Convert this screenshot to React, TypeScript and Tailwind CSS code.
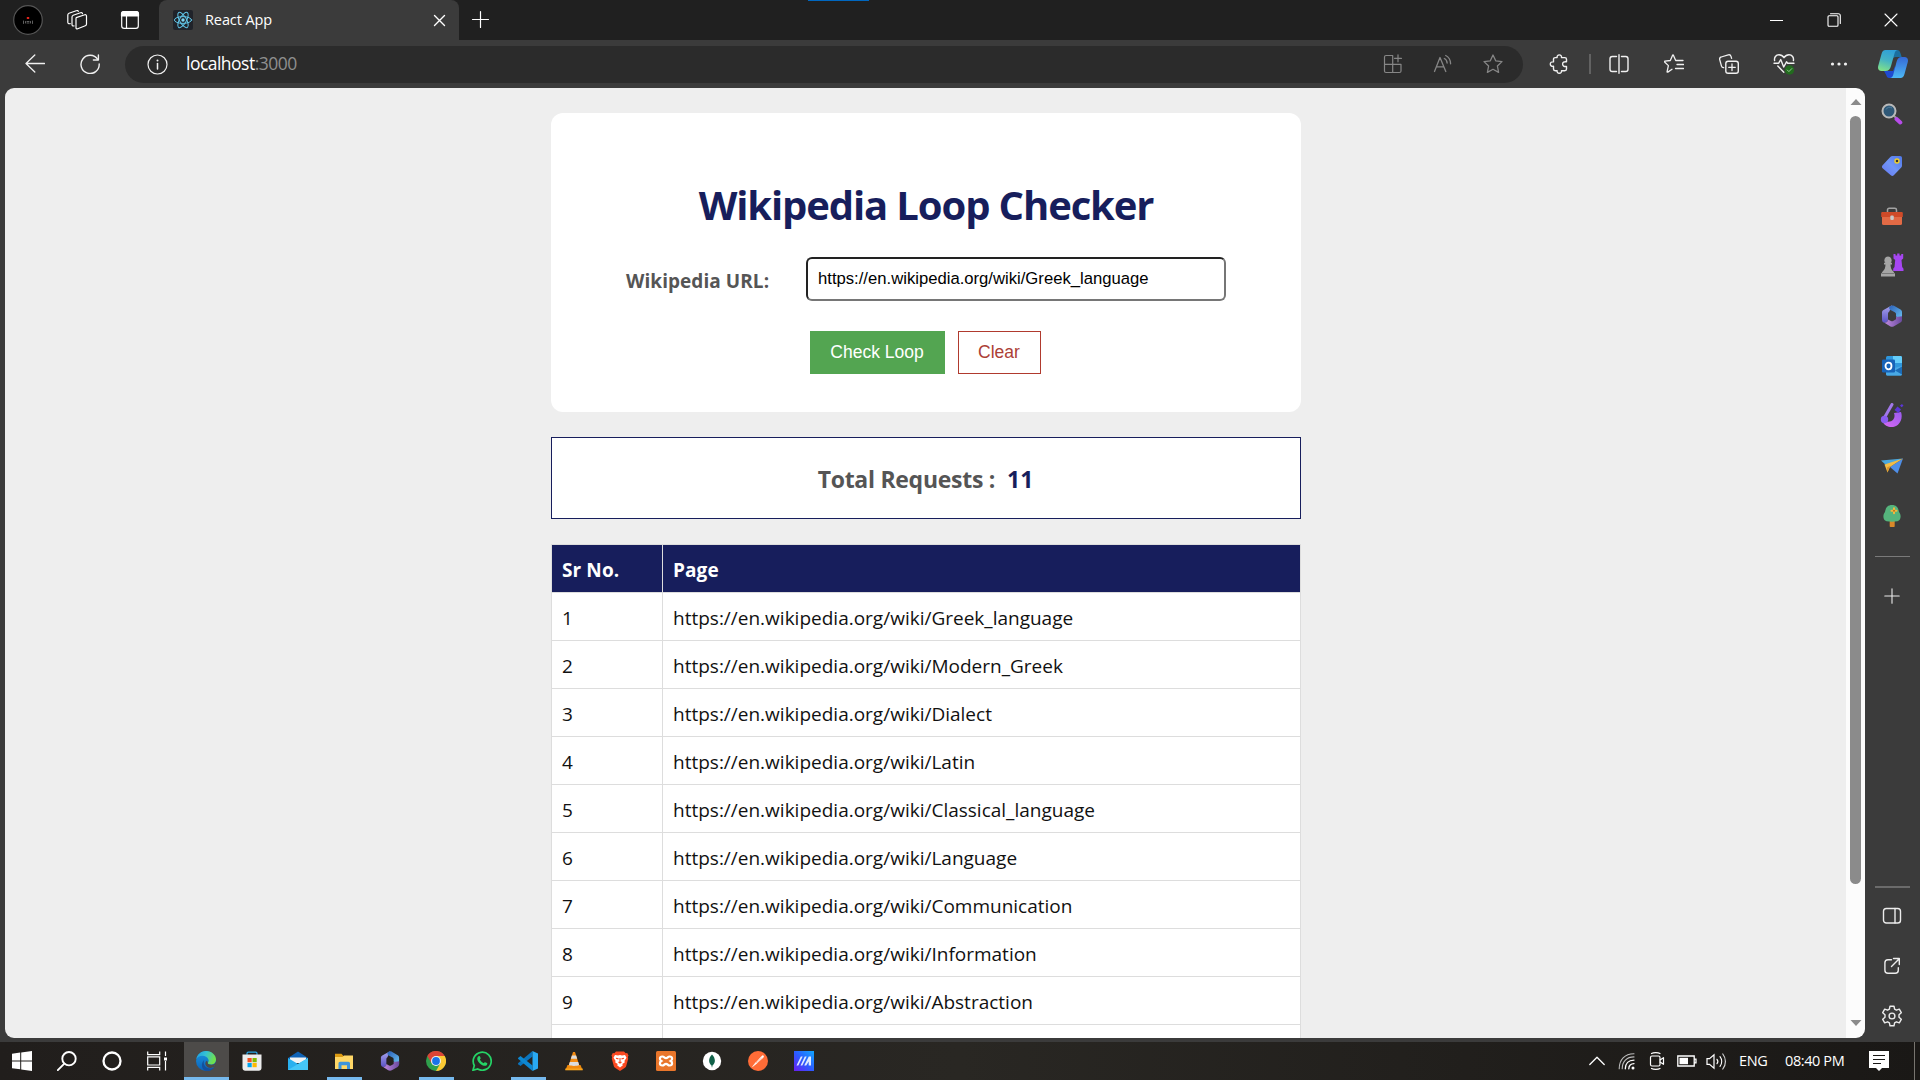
import React from "react";

type IconProps = { children: React.ReactNode; size?: number; className?: string; view?: string };

function Icon({ children, size = 20, className = "", view = "0 0 20 20" }: IconProps) {
  return (
    <svg
      width={size}
      height={size}
      viewBox={view}
      fill="none"
      stroke="currentColor"
      strokeWidth={1.2}
      strokeLinecap="round"
      strokeLinejoin="round"
      className={"block shrink-0 " + className}
    >
      {children}
    </svg>
  );
}

const pages = [
  "https://en.wikipedia.org/wiki/Greek_language",
  "https://en.wikipedia.org/wiki/Modern_Greek",
  "https://en.wikipedia.org/wiki/Dialect",
  "https://en.wikipedia.org/wiki/Latin",
  "https://en.wikipedia.org/wiki/Classical_language",
  "https://en.wikipedia.org/wiki/Language",
  "https://en.wikipedia.org/wiki/Communication",
  "https://en.wikipedia.org/wiki/Information",
  "https://en.wikipedia.org/wiki/Abstraction",
];

function ReactLogo() {
  return (
    <Icon>
      <rect width="20" height="20" rx="2" fill="#20232a" stroke="none" />
      <g stroke="#61c5e8" strokeWidth="1">
        <ellipse cx="10" cy="10" rx="8.6" ry="3.4" />
        <ellipse cx="10" cy="10" rx="8.6" ry="3.4" transform="rotate(60 10 10)" />
        <ellipse cx="10" cy="10" rx="8.6" ry="3.4" transform="rotate(120 10 10)" />
      </g>
      <circle cx="10" cy="10" r="1.7" fill="#7fd6f2" stroke="none" />
    </Icon>
  );
}

function TitleBar() {
  return (
    <header className="relative flex h-[40px] shrink-0 items-center bg-[#202020] text-[#f2f2f2]">
      <div className="flex w-[56px] justify-center">
        <Icon size={30} view="0 0 30 30">
          <circle cx="15" cy="15" r="14.3" fill="#000" stroke="#555" />
          <rect x="13.8" y="12" width="2.4" height="2" fill="#e0241c" stroke="none" />
          <path d="M10.500 16v2.500M12.500 16.500v1.500M19.500 16v2.500M17.500 16.500v1.500M14 16.500h2M14 18h2" stroke="#777" strokeWidth="0.8" />
        </Icon>
      </div>
      <div className="flex w-[42px] justify-center">
        <Icon size={22} view="0 0 22 22" className="text-white">
          <path d="M10.2 8.6l8.6-2.8c1-.3 1.7.2 1.7 1.2v8c0 .9-.4 1.5-1.2 1.8l-7.600 3c-1 .4-1.700-.1-1.700-1.100v-8.300c0-.9-.1-1.500.2-1.800z" />
          <path d="M8 16.900c-1.400.3-2-.2-2-1.300V8c0-.9.4-1.500 1.200-1.800l7.300-2.500c1-.3 1.900 0 2 .9" />
          <path d="M4.200 14.600c-1.600.4-2.400 0-2.400-1.300V6.100c0-.9.400-1.500 1.200-1.800l7.200-2.600c1.200-.4 2-.1 2.100.7" />
        </Icon>
      </div>
      <div className="flex w-[61px] justify-center pl-[2px]">
        <Icon className="text-white">
          <rect x="1.700" y="1.700" width="16.600" height="16.600" rx="2.400" />
          <path d="M1.500 6V3.800c0-1.400.9-2.300 2.300-2.300h12.400c1.400 0 2.300.9 2.300 2.300V6z" fill="currentColor" />
          <path d="M6.500 6v12" />
        </Icon>
      </div>
      <div className="flex h-[40px] w-[300px] items-center rounded-t-[8px] bg-[#3b3b3b] pl-[14px] pr-[13px]">
        <ReactLogo />
        <span className="ml-[12px] flex-1 whitespace-nowrap text-[14.500px] tracking-[-0.100px] text-white">React App</span>
        <Icon size={13} view="0 0 13 13" className="text-white">
          <path d="M1.500 1.500l10 10M11.500 1.500l-10 10" strokeWidth="1.400" />
        </Icon>
      </div>
      <Icon className="ml-[12px] text-white" size={20}>
        <path d="M9.500 1.500v16M1.500 9.500h16" strokeWidth="1.200" />
      </Icon>
      <div className="absolute left-[808px] top-0 h-[1px] w-[61px] bg-[#0067c0]" />
      <div className="ml-auto flex items-center pr-[1px] text-white">
        <div className="flex w-[57px] justify-center">
          <div className="h-[1px] w-[13px] bg-white" />
        </div>
        <div className="flex w-[57px] justify-center">
          <Icon size={14} view="0 0 14 14">
            <rect x="1" y="2.800" width="10" height="10.500" rx="1" strokeWidth="1.100" />
            <path d="M3.500 .7h7.800c1.300 0 2 .7 2 2v7.800" strokeWidth="1.100" />
          </Icon>
        </div>
        <div className="flex w-[57px] justify-center">
          <Icon size={14} view="0 0 14 14">
            <path d="M1 1l12 12M13 1L1 13" strokeWidth="1.100" />
          </Icon>
        </div>
      </div>
    </header>
  );
}

function Slot({ children }: { children: React.ReactNode }) {
  return <div className="flex w-[55px] shrink-0 items-center justify-center pr-[1px]">{children}</div>;
}

function Copilot() {
  return (
    <svg width="30" height="28" viewBox="0 0 30 28" className="block">
      <defs>
        <linearGradient id="cpA" x1="0.600" y1="0" x2="0.300" y2="1">
          <stop offset="0" stopColor="#2f9fd8" />
          <stop offset="0.500" stopColor="#45b3c4" />
          <stop offset="1" stopColor="#7fe08a" />
        </linearGradient>
        <linearGradient id="cpB" x1="0.500" y1="0" x2="0.500" y2="1">
          <stop offset="0" stopColor="#3569d6" />
          <stop offset="1" stopColor="#4db8f5" />
        </linearGradient>
      </defs>
      <path d="M16 0h3c2 0 2.800 1.200 3.400 3l1.300 4h-6c-2 0-2.700 1-3.300 3z" fill="#1b6f9f" />
      <path d="M6 21h9l2-5 0 8c-.7 2.500-1.700 4-3.600 4h-2.200c-1.700 0-2.400-1-3-3z" fill="#1f4bd0" />
      <path d="M7.500 0H20c-2 0-2.900 1.300-3.500 3.500L13 16c-.9 3.200-2.500 5-5.500 5H3.500C.8 21-.5 19 .2 16L3.500 4C4.200 1.400 5.400 0 7.500 0z" fill="url(#cpA)" />
      <path d="M22.500 28H11.800c2 0 2.900-1.300 3.500-3.500L18.500 12c.9-3.200 2.300-5 5.300-5h2.700c2.700 0 4 2 3.300 5L26.500 24c-.7 2.600-1.900 4-4 4z" fill="url(#cpB)" />
    </svg>
  );
}

function Toolbar() {
  return (
    <div className="flex h-[48px] shrink-0 items-center bg-[#3b3b3b] pl-[8px] text-[#f0f0f0]">
      <Slot>
        <Icon><path d="M19.500 9.500H1M9.800 1L1 9.500l8.800 8.500" strokeWidth="1.300" /></Icon>
      </Slot>
      <Slot>
        <Icon>
          <path d="M17.700 5.400A9.100 9.100 0 1 0 19.200 10" strokeWidth="1.400" />
          <path d="M18.400 1v5h-5" strokeWidth="1.400" />
        </Icon>
      </Slot>
      <div className="ml-[7px] flex h-[37px] w-[1398px] shrink-0 items-center rounded-full bg-[#2b2b2b] pl-[22px] pr-[5px]">
        <Icon size={21} view="0 0 21 21">
          <circle cx="10.500" cy="10.500" r="9.500" />
          <path d="M10.500 9.500v5.500" strokeWidth="1.500" />
          <circle cx="10.500" cy="6.500" r="1" fill="currentColor" stroke="none" />
        </Icon>
        <div className="ml-[18px] flex-1 whitespace-nowrap pb-[2px] text-[17.500px] tracking-[-0.520px] text-white">
          localhost<span className="text-[#8f8f8f]">:3000</span>
        </div>
        <div className="flex text-[#868686]">
          <div className="flex w-[50px] justify-center">
            <Icon>
              <path d="M9.700 1.500H3c-.9 0-1.500.6-1.500 1.500v14c0 .9.6 1.500 1.500 1.500h13.500c.9 0 1.500-.6 1.500-1.500v-6.700H1.500M9.700 1.500v17M15 .8v7M11.500 4.300h7" />
            </Icon>
          </div>
          <div className="flex w-[50px] justify-center">
            <Icon>
              <path d="M1.500 17.500L7 3.500l5.800 14M3.300 12.800h7.600M11.300 4.500c1.700.8 2.700 2.400 2.800 4.500M12.700 1.500c3 1.400 4.800 4.300 4.900 8.300" strokeWidth="1.300" />
            </Icon>
          </div>
          <div className="flex w-[50px] justify-center">
            <Icon>
              <path d="M10 1l2.700 5.800 6.300.8-4.600 4.400 1.200 6.400L10 15.300l-5.600 3.100L5.600 12 1 7.600l6.300-.8z" strokeWidth="1.300" />
            </Icon>
          </div>
        </div>
      </div>
      <div className="ml-[9px] flex items-center">
        <Slot>
          <Icon>
            <path d="M4.500 5.300c0-1 .7-1.700 1.700-1.700h1.900c-.2-1.600.7-2.700 2.200-2.700s2.400 1.100 2.200 2.700h3.300c1 0 1.700.7 1.700 1.700v2.500c-2.500-.4-3.900.6-3.900 2.300s1.400 2.700 3.900 2.300v2.700c0 1-.7 1.700-1.700 1.700h-3.300c.2 1.600-.7 2.500-2.200 2.500s-2.400-.9-2.200-2.500H6.200c-1 0-1.700-.7-1.700-1.700v-2.800C2.500 12.600 1.300 11.700 1.300 10S2.500 7.700 4.500 7.900z" strokeWidth="1.400" />
          </Icon>
        </Slot>
      </div>
      <div className="ml-[2px] mr-[1px] h-[20px] w-[2px] bg-[#626262]" />
      <Slot>
        <Icon>
          <path d="M7.500 2.500H3.300C2 2.500 1 3.500 1 4.800v10.400c0 1.300 1 2.300 2.300 2.300h4.200M12.500 2.500h4.200c1.300 0 2.300 1 2.300 2.300v10.400c0 1.300-1 2.300-2.300 2.300h-4.200M10 .7v18.600" strokeWidth="1.400" />
        </Icon>
      </Slot>
      <Slot>
        <Icon>
          <path d="M8 15.300l-4.200 2.800c-.5.200-.8 0-.7-.5l1.300-6L.6 8c-.4-.4-.2-.8.300-.9l5.400-.6L8.500 1.400c.3-.6.7-.6 1 0l2.200 5.100h7.300M13 10.500h6.500M11.500 14.500h8" strokeWidth="1.300" />
        </Icon>
      </Slot>
      <Slot>
        <Icon>
          <rect x="6.800" y="7.300" width="12.500" height="12" rx="2.300" strokeWidth="1.400" />
          <path d="M13 10v6.600M9.700 13.300h6.600M4.700 13.700c-1.300.1-1.900-.6-2.200-1.600L.7 5.600C.4 4.300 1 3.300 2.200 3L9.300.900c1.400-.4 2.300.2 2.700 1.500l.6 2" strokeWidth="1.300" />
        </Icon>
      </Slot>
      <Slot>
        <Icon size={22} view="0 0 22 22">
          <path d="M1.600 7.500C1 4.500 2.900 1.700 6 1.700c2.200 0 3.800 1.200 5 3 1.200-1.800 2.800-3 5-3 3.100 0 5 2.800 4.400 5.800M1 10.200h4.700l2-3.700 3 7.500 2.800-5.200 1.200 1.400H21M4.800 13l6 6.200" strokeWidth="1.400" />
          <circle cx="16.500" cy="17" r="4.700" fill="#226b1e" stroke="none" />
          <path d="M14.300 17l1.600 1.600 2.900-3" stroke="#8fc98c" strokeWidth="1" />
        </Icon>
      </Slot>
      <Slot>
        <Icon>
          <g fill="currentColor" stroke="none">
            <circle cx="3.500" cy="10" r="1.600" /><circle cx="10" cy="10" r="1.600" /><circle cx="16.500" cy="10" r="1.600" />
          </g>
        </Icon>
      </Slot>
      <div className="flex flex-1 justify-center pr-[2px]"><Copilot /></div>
    </div>
  );
}

function M365({ size = 22 }: { size?: number }) {
  return (
    <svg width={size} height={size} viewBox="0 0 22 22" className="block">
      <defs>
        <linearGradient id="mA" x1="0" y1="0" x2="0" y2="1"><stop offset="0" stopColor="#a9a5ee" /><stop offset="1" stopColor="#5b52c4" /></linearGradient>
        <linearGradient id="mB" x1="0" y1="0" x2="1" y2="1"><stop offset="0" stopColor="#2a5fb8" /><stop offset="1" stopColor="#6cc4f2" /></linearGradient>
        <linearGradient id="mC" x1="0" y1="0" x2="1" y2="0"><stop offset="0" stopColor="#c18be0" /><stop offset="1" stopColor="#6a4a9f" /></linearGradient>
      </defs>
      <path d="M11 .2L2.500 4.900C1.500 5.500 1 6.300 1 7.500v7.200c0 1.700 1.200 3 2.700 3 2 0 3.300-1.400 3.300-3.300V8.800c0-.9.4-1.500 1.200-2z" fill="url(#mA)" />
      <path d="M8.700 1.500C10 .4 11.500 0 13 .8l6.500 3.800c1 .6 1.500 1.500 1.500 2.700v7.200l-6-3V9.200c0-1-.3-1.500-1.200-2L9.500 5C8 4 7.800 2.300 8.700 1.500z" fill="url(#mB)" />
      <path d="M3.500 17.700c2.100 0 3.500-1.300 3.500-3.300l3 1.600c.8.400 1.300.4 2.100 0l2.900-1.700V12l6-.8v3.500c0 1.300-.5 2.200-1.600 2.900l-6.400 3.700c-1.300.7-2.600.7-4 0z" fill="url(#mC)" />
    </svg>
  );
}

const sideIcons: { className: string; icon: React.ReactNode }[] = [
  {
    className: "pb-[2px]",
    icon: (
      <svg width="22" height="22" viewBox="0 0 22 22">
        <path d="M12.500 12.500l4 3.500" stroke="#999" strokeWidth="2" />
        <path d="M15.500 16l3.800 3.500" stroke="#b74cea" strokeWidth="4" strokeLinecap="round" />
        <circle cx="8" cy="8" r="6.500" fill="#2f5877" stroke="#b9b9b9" strokeWidth="2" />
        <path d="M5 6.500a4 4 0 0 1 6-1.500" stroke="#4f7d9c" fill="none" />
      </svg>
    ),
  },
  {
    className: "pt-[1px]",
    icon: (
      <svg width="22" height="22" viewBox="0 0 22 22">
        <defs><linearGradient id="tg" x1="1" y1="0" x2="0" y2="1"><stop offset="0" stopColor="#4f78e8" /><stop offset="0.500" stopColor="#7195f7" /><stop offset="1" stopColor="#6477f2" /></linearGradient></defs>
        <path d="M11.500 1H19c1.300 0 2 .7 2 2v7.500c0 1-.3 1.600-1 2.300l-7.200 7.400c-1 1-2 1-3 0L1.600 13.300c-.9-1-.9-2 0-3L9.300 2c.7-.7 1.300-1 2.200-1z" fill="url(#tg)" />
        <circle cx="16" cy="6" r="2" fill="#353535" stroke="#f1cf29" strokeWidth="1.400" />
      </svg>
    ),
  },
  {
    className: "pt-[3px]",
    icon: (
      <svg width="24" height="22" viewBox="0 0 24 22">
        <path d="M7.500 6V4c0-1 .6-1.700 1.700-1.700h5.600c1.100 0 1.700.7 1.700 1.700v2" stroke="#a3a3a3" strokeWidth="1.500" fill="none" />
        <rect x="2" y="9" width="20" height="10" rx="1.500" fill="#e26a45" />
        <path d="M2.500 6h19c.8 0 1.300.5 1.300 1.300V11H1.200V7.300C1.200 6.500 1.700 6 2.500 6z" fill="#cf4a28" />
        <rect x="10.300" y="9.500" width="3.500" height="4.500" rx="1.200" fill="#c9c9c9" />
      </svg>
    ),
  },
  {
    className: "",
    icon: (
      <svg width="24" height="24" viewBox="0 0 24 24">
        <path d="M13.500 1h2v1.600h1.700V.6h2.300v2h1.700V1h2v4.500l-1.700 1.500.7 7 1.300 1.700V18H13.200v-2.300l1.300-1.700.7-7-1.700-1.500z" fill="#a646f2" />
        <path d="M8 3.500a3.700 3.700 0 0 1 2.700 6.200h1.300v1.800h-1.500c.1 3 .8 5.300 2.700 6.800l1.800 2.700V23.500H1V21l1.800-2.700c1.900-1.500 2.600-3.800 2.700-6.800H4V9.700h1.300A3.700 3.700 0 0 1 8 3.500z" fill="#a5a5a5" />
        <path d="M2 20.500h12" stroke="#787878" />
      </svg>
    ),
  },
  { className: "pt-[1px]", icon: <M365 /> },
  {
    className: "pt-[2px]",
    icon: (
      <svg width="22" height="22" viewBox="0 0 22 22">
        <rect x="5" y="1" width="16" height="19.500" rx="1.500" fill="#2f97dc" />
        <path d="M12 1h7.500c.8 0 1.500.7 1.500 1.500V8h-9z" fill="#64cdfa" />
        <path d="M5 15l16-4v8c0 .9-.6 1.500-1.500 1.500H6.500c-.9 0-1.500-.6-1.500-1.500z" fill="#48a9e6" />
        <path d="M14 15.500l7-4v8z" fill="#1b6cb8" />
        <rect x="1" y="4.500" width="13" height="13" rx="1.300" fill="#1763b8" />
        <ellipse cx="7.500" cy="11" rx="3" ry="3.300" fill="none" stroke="#fff" strokeWidth="1.800" />
      </svg>
    ),
  },
  {
    className: "",
    icon: (
      <svg width="24" height="24" viewBox="0 0 24 24">
        <defs><linearGradient id="dg" x1="1" y1="0" x2="0" y2="1"><stop offset="0" stopColor="#9a5cf0" /><stop offset="1" stopColor="#d868f2" /></linearGradient></defs>
        <path d="M5 18c2.500 1.300 6.500.8 8.300-1.500 1.500-2 1.500-4 .7-6.500l7-1c1.500 4 .6 9.500-3 12.700C13.500 25.500 5 24.500 3 19z" fill="url(#dg)" />
        <path d="M4.500 14.500L12 1.500" stroke="#a177ea" strokeWidth="3" strokeLinecap="round" />
        <circle cx="4.500" cy="16.500" r="3.700" fill="#8a5cf0" />
        <path d="M14.500 7l3-3.500 3.500 3-2.500 3.500zM20 2.500l2-1.500 1.500 1.800-2 1.500z" fill="#5c36d8" />
      </svg>
    ),
  },
  {
    className: "pt-[1px]",
    icon: (
      <svg width="22" height="20" viewBox="0 0 22 20">
        <path d="M0 4.500L22 2.500 6 10z" fill="#4aa7dd" />
        <path d="M9 11L22 2.500 16.500 17.500z" fill="#4f8fe8" />
        <path d="M3.500 8.500L22 2.500 9 11l-2.500 5.500z" fill="#f4bd45" />
        <path d="M6 11.500l3-1.500-2.500 6.500z" fill="#d8912b" />
      </svg>
    ),
  },
  {
    className: "pt-[2px]",
    icon: (
      <svg width="22" height="24" viewBox="0 0 22 24">
        <rect x="8.700" y="16" width="5" height="7" rx=".8" fill="#d9892a" />
        <path d="M11 1c5 0 6.500 3.500 7 7 2.300 2.500 2.400 8.500-1.500 9.300-3.500.6-7.500.6-11 0C1.600 16.500 1.700 10.500 4 8c.5-3.500 2-7 7-7z" fill="#55b47c" />
        <path d="M13 4.200v5M10.500 6.700h5" stroke="#f5b83d" strokeWidth="2" strokeLinecap="round" />
        <circle cx="13" cy="6.700" r="1" fill="#b8701c" />
      </svg>
    ),
  },
];

function SideBar() {
  return (
    <aside className="flex w-[55px] shrink-0 flex-col items-center bg-[#3b3b3b] pr-[1px] pt-[2px] text-[#ececec]">
      {sideIcons.map((item, i) => (
        <div key={i} className={"flex h-[50px] items-center justify-center " + item.className}>{item.icon}</div>
      ))}
      <div className="mt-[16px] h-[1px] w-[35px] shrink-0 bg-[#7a7a7a]" />
      <div className="mt-[31px] flex h-[16px] items-center">
        <Icon size={16} view="0 0 16 16"><path d="M8 .8v14.400M.8 8h14.400" strokeWidth="1.100" /></Icon>
      </div>
      <div className="mt-auto h-[2px] w-[35px] shrink-0 bg-[#6b6b6b]" />
      <div className="flex flex-col items-center pb-[1px] pt-[3px]">
        <div className="flex h-[50px] items-center">
          <Icon><rect x="1.500" y="2.500" width="17" height="14.500" rx="2.800" strokeWidth="1.400" /><path d="M13 2.500V17" strokeWidth="1.400" /></Icon>
        </div>
        <div className="flex h-[50px] items-center">
          <Icon><path d="M9.500 3.700H6C4 3.700 2.900 4.800 2.900 6.800v7.400c0 2 1.100 3.100 3.100 3.100h7.200c2 0 3.100-1.100 3.100-3.100v-2.400M11.500 2.500h5.800v6M17 2.900l-7.500 7.600" strokeWidth="1.400" /></Icon>
        </div>
        <div className="flex h-[50px] items-center">
          <Icon size={22} view="0 0 22 22">
            <circle cx="11" cy="11" r="2.900" strokeWidth="1.400" />
            <path d="M9 1.200h4l.6 3 1.800 1 2.900-1 2 3.500-2.300 2v2.600l2.300 2-2 3.500-2.900-1-1.800 1-.6 3H9l-.6-3-1.800-1-2.900 1-2-3.500 2.300-2V9.700l-2.300-2 2-3.500 2.900 1 1.800-1z" strokeWidth="1.400" />
          </Icon>
        </div>
      </div>
    </aside>
  );
}

function LoopChecker() {
  return (
    <div className="flex min-w-0 flex-1 flex-col items-center overflow-hidden bg-[#eeeeee] pl-[1px] pt-[25px]">
      <section className="flex h-[299px] w-[750px] shrink-0 flex-col items-center rounded-[12px] bg-white pt-[65px]">
        <h1 className="h-[54px] whitespace-nowrap text-[40px] font-bold leading-[54px] tracking-[-1.120px] text-[#171e5c]">
          Wikipedia Loop Checker
        </h1>
        <div className="mt-[25px] flex h-[44px] w-full items-center pl-[75px]">
          <label className="w-[180px] whitespace-nowrap pt-[5px] text-[19px] font-bold tracking-[0.060px] text-[#555555]">Wikipedia URL:</label>
          <div className="flex h-[44px] w-[420px] items-center rounded-[6px] border-2 border-b-[#767676] border-l-[#222222] border-r-[#767676] border-t-[#222222] bg-white pb-[2px] pl-[10px] font-['Liberation_Sans',Arial,sans-serif] text-[16.670px] text-black">
            https://en.wikipedia.org/wiki/Greek_language
          </div>
        </div>
        <div className="mt-[30px] flex gap-[13px] pr-[2px] font-['Liberation_Sans',Arial,sans-serif] text-[17.500px]">
          <button className="h-[43px] w-[135px] whitespace-nowrap bg-[#53a551] text-white">Check Loop</button>
          <button className="h-[43px] w-[83px] border border-[#b03a2e] bg-white text-[#ac4036]">Clear</button>
        </div>
      </section>
      <section className="mt-[25px] flex h-[82px] w-[750px] shrink-0 items-center justify-center border border-[#171e5c] bg-white pr-[1px] pt-[2px] text-[23px] font-bold text-[#555555]">
        <span className="whitespace-pre tracking-[-0.280px]">Total Requests :</span>
        <span className="ml-[12px] text-[#171e5c]">11</span>
      </section>
      <table className="mt-[25px] w-[750px] shrink-0 table-fixed border-collapse bg-white text-[19px] text-[#111111]">
        <thead>
          <tr className="h-[48px] bg-[#171e5c] text-left tracking-[0.100px] text-white">
            <th className="w-[111px] border border-[#dddddd] px-[10px] pb-0 pt-[3px] font-bold">Sr No.</th>
            <th className="border border-[#dddddd] px-[10px] pb-0 pt-[3px] font-bold">Page</th>
          </tr>
        </thead>
        <tbody>
          {pages.map((page, i) => (
            <tr key={page} className="h-[48px]">
              <td className="border border-[#dddddd] px-[10px] pb-0 pt-[3px]">{i + 1}</td>
              <td className="border border-[#dddddd] px-[10px] pb-0 pt-[3px]">{page}</td>
            </tr>
          ))}
          <tr className="h-[48px]">
            <td className="border border-[#dddddd]" />
            <td className="border border-[#dddddd]" />
          </tr>
        </tbody>
      </table>
    </div>
  );
}

function ScrollBar() {
  return (
    <div className="flex w-[19px] shrink-0 flex-col items-center bg-[#fcfcfc]">
      <svg width="12" height="6" viewBox="0 0 12 6" className="mt-[11px] shrink-0"><path d="M6 0l5.500 6H.5z" fill="#8b8b8b" /></svg>
      <div className="mt-[11px] h-[768px] w-[11px] shrink-0 rounded-full bg-[#8b8b8b]" />
      <svg width="12" height="6" viewBox="0 0 12 6" className="mb-[12px] mt-auto shrink-0"><path d="M6 6L.5 0h11z" fill="#8b8b8b" /></svg>
    </div>
  );
}

const taskApps: { name: string; open?: boolean; active?: boolean; icon: React.ReactNode }[] = [
  {
    name: "edge", active: true,
    icon: (
      <svg width="20" height="20" viewBox="0 0 20 20">
        <defs>
          <linearGradient id="eA" x1="0" y1="0" x2="1" y2="0.300"><stop offset="0" stopColor="#1b9de2" /><stop offset="0.500" stopColor="#35c1d5" /><stop offset="1" stopColor="#6fe04d" /></linearGradient>
          <linearGradient id="eB" x1="0" y1="0" x2="0" y2="1"><stop offset="0" stopColor="#1a94e0" /><stop offset="1" stopColor="#0b62b8" /></linearGradient>
        </defs>
        <circle cx="10" cy="10" r="10" fill="url(#eB)" />
        <path d="M.2 8.500C1.200 3.500 5 0 10 0c6 0 10 4.200 10 8.500 0 3-2.200 5-5 5-2.500 0-3.700-1-3-2 .8-1 .8-2 .4-3C11.500 6 9 4.800 6.500 4.800 3.500 4.800 1 6.300.2 8.500z" fill="url(#eA)" />
        <path d="M8.200 9C6.500 13.500 9.500 17.500 14 17.500c2 0 3.500-.5 4.700-1.600C16 19.700 12.500 20.500 9.500 20 5.500 18.500 4.500 12.500 8.200 9z" fill="#15509c" />
        <path d="M11.800 11c-.8 1.500 1 3 4 2.700 1.400-.1 2.700-.8 3.500-1.800-.3 1.700-.6 3-1.200 3.900-2 1.600-6 1.700-8-1-1.300-1.900-1-4 .7-5z" fill="#4d4b49" />
        <path d="M20 10.500v4l-1.600 1.600.5-3z" fill="#4d4b49" />
      </svg>
    ),
  },
  {
    name: "store",
    icon: (
      <svg width="20" height="20" viewBox="0 0 20 20">
        <path d="M5 4V2.500c0-.8.500-1.300 1.300-1.300h7.400c.8 0 1.300.5 1.300 1.300V4" fill="none" stroke="#28a8e8" strokeWidth="1.200" />
        <path d="M.5 3.500h19V17c0 1.600-1.100 2.700-2.700 2.700H3.200C1.600 19.700.5 18.600.5 17z" fill="#ececec" />
        <rect x="5.500" y="7" width="4.200" height="4.200" fill="#f25022" /><rect x="10.500" y="7" width="4.200" height="4.200" fill="#7fba00" />
        <rect x="5.500" y="12" width="4.200" height="4.200" fill="#00a4ef" /><rect x="10.500" y="12" width="4.200" height="4.200" fill="#ffb900" />
      </svg>
    ),
  },
  {
    name: "mail",
    icon: (
      <svg width="20" height="20" viewBox="0 0 20 20">
        <path d="M0 7l10-6.500L20 7v4H0z" fill="#0f62b5" /><path d="M2 6.500h16V12H2z" fill="#f3f3f3" />
        <path d="M0 7l10 6 10-6v12H0z" fill="#29b0ef" /><path d="M0 19L20 7v12z" fill="#45c6f7" />
      </svg>
    ),
  },
  {
    name: "explorer", open: true,
    icon: (
      <svg width="20" height="20" viewBox="0 0 20 20">
        <path d="M1 2.700h6.500L9.500 5H19v4H1z" fill="#dc9b12" /><path d="M1 6h7.500l1.500-1.500h9V18H1z" fill="#ffd766" />
        <path d="M4.500 18v-5.500c0-1.100.7-1.800 1.800-1.800h8c1.100 0 1.700.7 1.700 1.800V18h-3v-3.700H7.500V18z" fill="#3d94dc" />
      </svg>
    ),
  },
  { name: "m365", icon: <M365 size={20} /> },
  {
    name: "chrome", open: true,
    icon: (
      <svg width="20" height="20" viewBox="0 0 20 20">
        <circle cx="10" cy="10" r="10" fill="#2fa04c" />
        <path d="M1.300 5A10 10 0 0 1 18.700 5H10L5.700 12.500z" fill="#db4437" />
        <path d="M18.700 5A10 10 0 0 1 10 20l4.300-7.500L10 5z" fill="#fcc934" />
        <circle cx="10" cy="10" r="5" fill="#f1f1f1" /><circle cx="10" cy="10" r="3.900" fill="#1a73e8" />
      </svg>
    ),
  },
  {
    name: "whatsapp",
    icon: (
      <svg width="20" height="20" viewBox="0 0 20 20">
        <path d="M1 19.200l1.300-4.700A9 9 0 1 1 5.700 18z" fill="#292723" stroke="#25d366" strokeWidth="1.700" />
        <path d="M6.500 5.300c.7-.6 1.400-.2 1.600.4l.6 1.500c.1.400-.3.800-.8 1.400.9 1.700 2 2.800 3.800 3.600.6-.8 1-1.200 1.500-1l1.800.9c.5.300.4 1.200-.1 1.900-.8 1-2.400 1.100-4 .4-2.500-1-4.500-3-5.500-5.500-.4-1.400 0-2.800 1.100-3.600z" fill="#25d366" />
      </svg>
    ),
  },
  {
    name: "vscode", open: true,
    icon: (
      <svg width="20" height="20" viewBox="0 0 20 20">
        <path d="M14.500 0v5.600L2.500 15 .3 13.200c-.4-.4-.4-.8 0-1.200z" fill="#0a74bd" />
        <path d="M14.500 20v-5.600L2.500 5 .3 6.800c-.4.400-.4.800 0 1.200z" fill="#0d87d1" />
        <path d="M14.500 0L20 2.500v15L14.500 20z" fill="#29a9f2" />
      </svg>
    ),
  },
  {
    name: "vlc",
    icon: (
      <svg width="20" height="20" viewBox="0 0 20 20">
        <path d="M3.500 14h13l2 5H1.500z" fill="#f08a0c" /><path d="M9 1h2l4.500 14c-1.500 1.800-9.500 1.800-11 0z" fill="#f28a10" />
        <path d="M7.900 4.500h4.200l1.100 3.300H6.800zM5.800 11h8.400l.9 3c-2 1.200-8.200 1.200-10.200 0z" fill="#dcdcdc" />
        <path d="M1.300 17.500h17.400V19.300H1.300z" fill="#f9a41c" />
      </svg>
    ),
  },
  {
    name: "brave",
    icon: (
      <svg width="20" height="20" viewBox="0 0 20 20">
        <path d="M6 .5h8l1.700 1.800 1.500-.2 1.300 2.300-.6 1.700.3 1.600-2 7.300c-.3 1-.8 1.500-1.600 2L10 20l-4.600-3c-.8-.5-1.300-1-1.600-2l-2-7.300.3-1.600-.6-1.700 1.300-2.300 1.500.2z" fill="#fb4a22" />
        <path d="M5 4l3 .6L10 4l2 .6L15 4l1.500 2.700-2 3 .2 1.700-2.500 1.600.7 1.300L10 16.500l-2.900-2.200.7-1.300-2.500-1.600.2-1.700-2-3z" fill="#fff" />
        <path d="M6 7.200l2.500.7M14 7.200l-2.500.7M10 7v4.500M8.500 11l1.500 1 1.500-1" stroke="#fb4a22" strokeWidth="1.100" fill="none" />
      </svg>
    ),
  },
  {
    name: "xampp",
    icon: (
      <svg width="20" height="20" viewBox="0 0 20 20">
        <rect width="20" height="20" rx="1.500" fill="#e9762b" />
        <path d="M6.300 5.500c2 0 2 1.700 3.700 1.700s1.700-1.700 3.700-1.700c3 0 3 3.300 1 4.500 2 1.200 2 4.500-1 4.500-2 0-2-1.700-3.700-1.700s-1.700 1.700-3.700 1.700c-3 0-3-3.300-1-4.500-2-1.200-2-4.500 1-4.500z" fill="none" stroke="#fff" strokeWidth="2.200" />
      </svg>
    ),
  },
  {
    name: "mongodb",
    icon: (
      <svg width="20" height="20" viewBox="0 0 20 20">
        <circle cx="10" cy="10" r="9.200" fill="#fff" />
        <path d="M10 3.500c2 2.200 2.900 4 2.900 6.300 0 2.200-1.200 3.700-2.600 4.900v1.600h-.6v-1.600c-1.400-1.200-2.600-2.700-2.600-4.900 0-2.300.9-4.100 2.900-6.300z" fill="#116149" />
      </svg>
    ),
  },
  {
    name: "postman",
    icon: (
      <svg width="20" height="20" viewBox="0 0 20 20">
        <circle cx="10" cy="10" r="10" fill="#ff6c37" />
        <path d="M15.300 4.400c1 1 .6 1.900-.3 2.700L9.300 12l-1.100-1 5-5.400c.7-.9 1.300-1.900 2.100-1.200z" fill="#fff" />
        <path d="M8 11.200l1 1-4.500 3.500z" fill="#fff" stroke="#fff" strokeWidth=".5" />
        <path d="M9 11.500l5-5" stroke="#ff9a76" strokeWidth=".7" />
      </svg>
    ),
  },
  {
    name: "media",
    icon: (
      <svg width="20" height="20" viewBox="0 0 20 20">
        <defs><linearGradient id="ms" x1="0" y1="1" x2="1" y2="0"><stop offset="0" stopColor="#6a1df0" /><stop offset="0.500" stopColor="#2b5cff" /><stop offset="1" stopColor="#10a8ff" /></linearGradient></defs>
        <rect width="20" height="20" fill="url(#ms)" />
        <path d="M6.800 5.500h1.900L4.300 14.500H2.500zM10.800 5.500h1.900L8.300 14.500H6.500zM14.800 5.500H17v9h-2.300v-4l-2.500 4h-2z" fill="#dfe9ff" />
      </svg>
    ),
  },
];

function TaskBar() {
  return (
    <footer className="flex h-[38px] shrink-0 bg-gradient-to-r from-[#211e1c] via-[#292723] to-[#1a1816] text-white">
      <div className="flex w-[45px] items-center justify-center pr-[1px]">
        <svg width="20" height="20" viewBox="0 0 20 20" fill="#fff"><path d="M0 2.800l8.200-1.200v7.900H0zM9.200 1.400L20 0v9.500H9.200zM0 10.400h8.200v7.900L0 17.200zM9.200 10.400H20V20L9.200 18.500z" /></svg>
      </div>
      <div className="flex w-[45px] items-center justify-center pr-[1px]">
        <Icon><circle cx="12" cy="7.700" r="6.700" strokeWidth="1.900" /><path d="M7.300 12.700L.8 19.200" strokeWidth="1.900" /></Icon>
      </div>
      <div className="flex w-[45px] items-center justify-center pr-[1px]">
        <Icon><circle cx="10" cy="10" r="8.500" strokeWidth="2.300" /></Icon>
      </div>
      <div className="flex w-[49px] items-center pl-[12px]">
        <Icon>
          <path d="M.7.500v3.200h12V.5M.7 19.500v-3.200h12v3.200M.7 5.800h12v8.200H.7zM18.500.5v4.500M18.500 10v9.500" strokeLinecap="butt" strokeLinejoin="miter" />
          <rect x="17" y="6.500" width="3" height="3" fill="#fff" stroke="none" />
        </Icon>
      </div>
      {taskApps.map((app) => (
        <div key={app.name} className={"mr-[1px] flex w-[45px] flex-col items-center " + (app.active ? "bg-[#4d4b49]" : "")}>
          <div className="flex h-[35px] items-center pr-[1px] pt-[3px]">{app.icon}</div>
          {app.active && <div className="h-[3px] w-full bg-[#76b9ed]" />}
          {app.open && <div className="mr-[1px] h-[3px] w-[35px] bg-[#76b9ed]" />}
        </div>
      ))}
      <div className="ml-auto flex items-center whitespace-nowrap text-[14.500px]">
        <Icon size={16} view="0 0 16 16"><path d="M.8 11.500L8 4.300l7.200 7.200" strokeWidth="1.300" /></Icon>
        <Icon className="ml-[13px]" size={18} view="0 0 18 18">
          <circle cx="15" cy="16" r="1.500" fill="#fff" stroke="none" />
          <path d="M10.800 16.800c0-3.300 2-5.200 5.200-5.200M7.300 16.800c0-5.400 3.300-8.700 8.700-8.700" strokeWidth="1.300" />
          <path d="M4.200 16.800C4.200 9.500 8.700 4.900 16 4.900M1.200 16.800C1.200 7.500 6.700 1.700 16 1.700" stroke="#bdbdbd" strokeWidth="1.100" />
        </Icon>
        <Icon className="ml-[13px]" size={18} view="0 0 18 18">
          <rect x="1.500" y="4" width="9.500" height="10" rx="1.500" strokeWidth="1.200" />
          <path d="M11 8l3.500-2.300v6.600L11 10M2.500 1.500c2-1.200 6.500-1.200 8.500 0M2.500 16.500c2 1.200 6.500 1.200 8.500 0" strokeWidth="1.200" />
        </Icon>
        <Icon className="ml-[10px]" size={20}>
          <path d="M.8 5h16.400v10H.8zM17.500 8.200h1.500v3.600h-1.500" strokeLinejoin="miter" strokeWidth="1.300" />
          <rect x="2.500" y="6.800" width="8.500" height="6.400" fill="#fff" stroke="none" />
        </Icon>
        <Icon className="ml-[9px]" size={21} view="0 0 21 21">
          <path d="M1 7.700h2.500L8 3.800v13.400l-4.500-3.900H1z" strokeLinejoin="miter" />
          <path d="M11 8.300c1 1.300 1 3.100 0 4.400M14 5.700c2.200 2.800 2.200 6.800 0 9.600" />
          <path d="M16.800 3c3.500 4.500 3.500 10.500 0 15" stroke="#d0d0d0" />
        </Icon>
        <span className="ml-[12px] w-[46px] tracking-[-0.300px]">ENG</span>
        <span className="w-[84px] tracking-[-0.400px]">08:40 PM</span>
        <svg width="20" height="20" viewBox="0 0 20 20" className="mr-[25px]">
          <path d="M0 0h20v17h-7l-3 3-3-3H0z" fill="#fff" />
          <path d="M4 4.500h12M4 8.500h12M4 12.500h8" stroke="#1a1816" strokeWidth="1.100" />
        </svg>
        <div className="mr-[5px] h-[38px] w-[1px] bg-[#77746f]" />
      </div>
    </footer>
  );
}

export default function App() {
  return (
    <div className="flex h-[1080px] w-[1920px] flex-col overflow-hidden bg-[#3b3b3b] font-['Open_Sans','Noto_Sans',sans-serif]">
      <TitleBar />
      <Toolbar />
      <div className="flex h-[954px] shrink-0">
        <main className="ml-[5px] flex h-[950px] w-[1860px] shrink-0 overflow-hidden rounded-[9px]">
          <LoopChecker />
          <ScrollBar />
        </main>
        <SideBar />
      </div>
      <TaskBar />
    </div>
  );
}
